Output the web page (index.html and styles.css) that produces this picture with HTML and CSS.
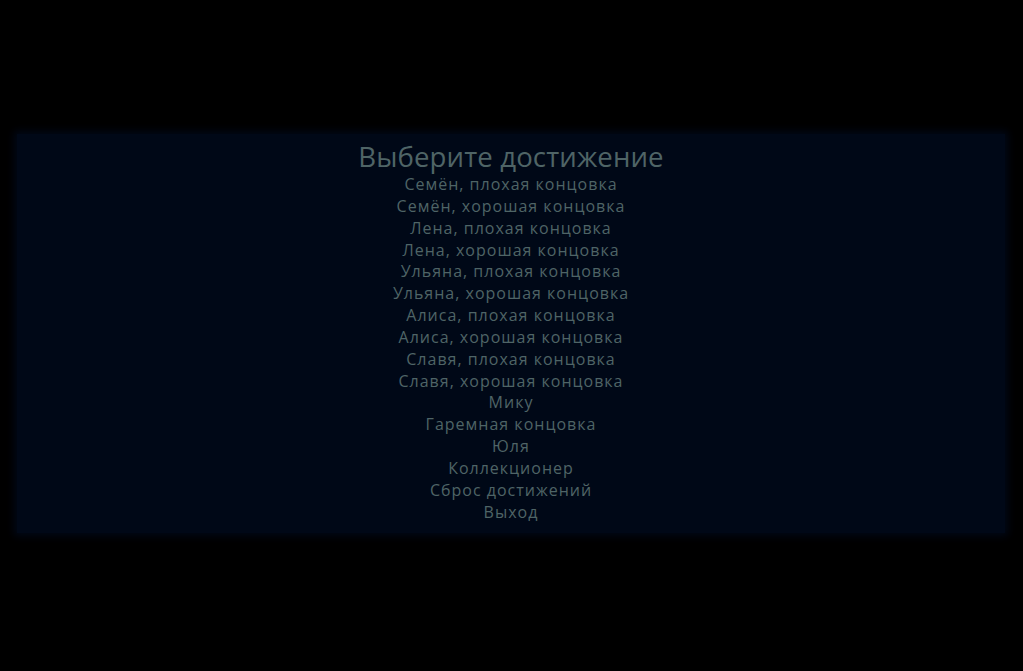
FILE: index.html
```html
<!DOCTYPE html>
<html lang="ru">
<head>
<meta charset="utf-8">
<link rel="stylesheet" href="styles.css">
</head>
<body>
<div class="screen">
  <div class="panel">
    <h1 class="title">Выберите достижение</h1>
    <ul class="menu">
      <li>Семён, плохая концовка</li>
      <li>Семён, хорошая концовка</li>
      <li>Лена, плохая концовка</li>
      <li>Лена, хорошая концовка</li>
      <li>Ульяна, плохая концовка</li>
      <li>Ульяна, хорошая концовка</li>
      <li>Алиса, плохая концовка</li>
      <li>Алиса, хорошая концовка</li>
      <li>Славя, плохая концовка</li>
      <li>Славя, хорошая концовка</li>
      <li>Мику</li>
      <li>Гаремная концовка</li>
      <li>Юля</li>
      <li>Коллекционер</li>
      <li>Сброс достижений</li>
      <li>Выход</li>
    </ul>
  </div>
</div>
</body>
</html>
```
FILE: styles.css
```css
html, body {
  margin: 0;
  padding: 0;
  background: #000;
  width: 1023px;
  height: 671px;
  overflow: hidden;
}
.screen {
  padding: 134px 18px 0 17px;
}
.panel {
  background: #000817;
  box-shadow: 0 0 8px 3px #000817;
  height: 399px;
  display: flex;
  flex-direction: column;
  align-items: center;
  font-family: "Open Sans", sans-serif;
  color: #4f6466;
}
.title {
  margin: 4px 0 0 0;
  font-size: 27.6px;
  font-weight: normal;
  line-height: 36px;
  letter-spacing: 0.1px;
}
.menu {
  list-style: none;
  margin: 0;
  padding: 0;
  text-align: center;
  font-size: 16px;
  line-height: 21.85px;
  letter-spacing: 1px;
}
```
